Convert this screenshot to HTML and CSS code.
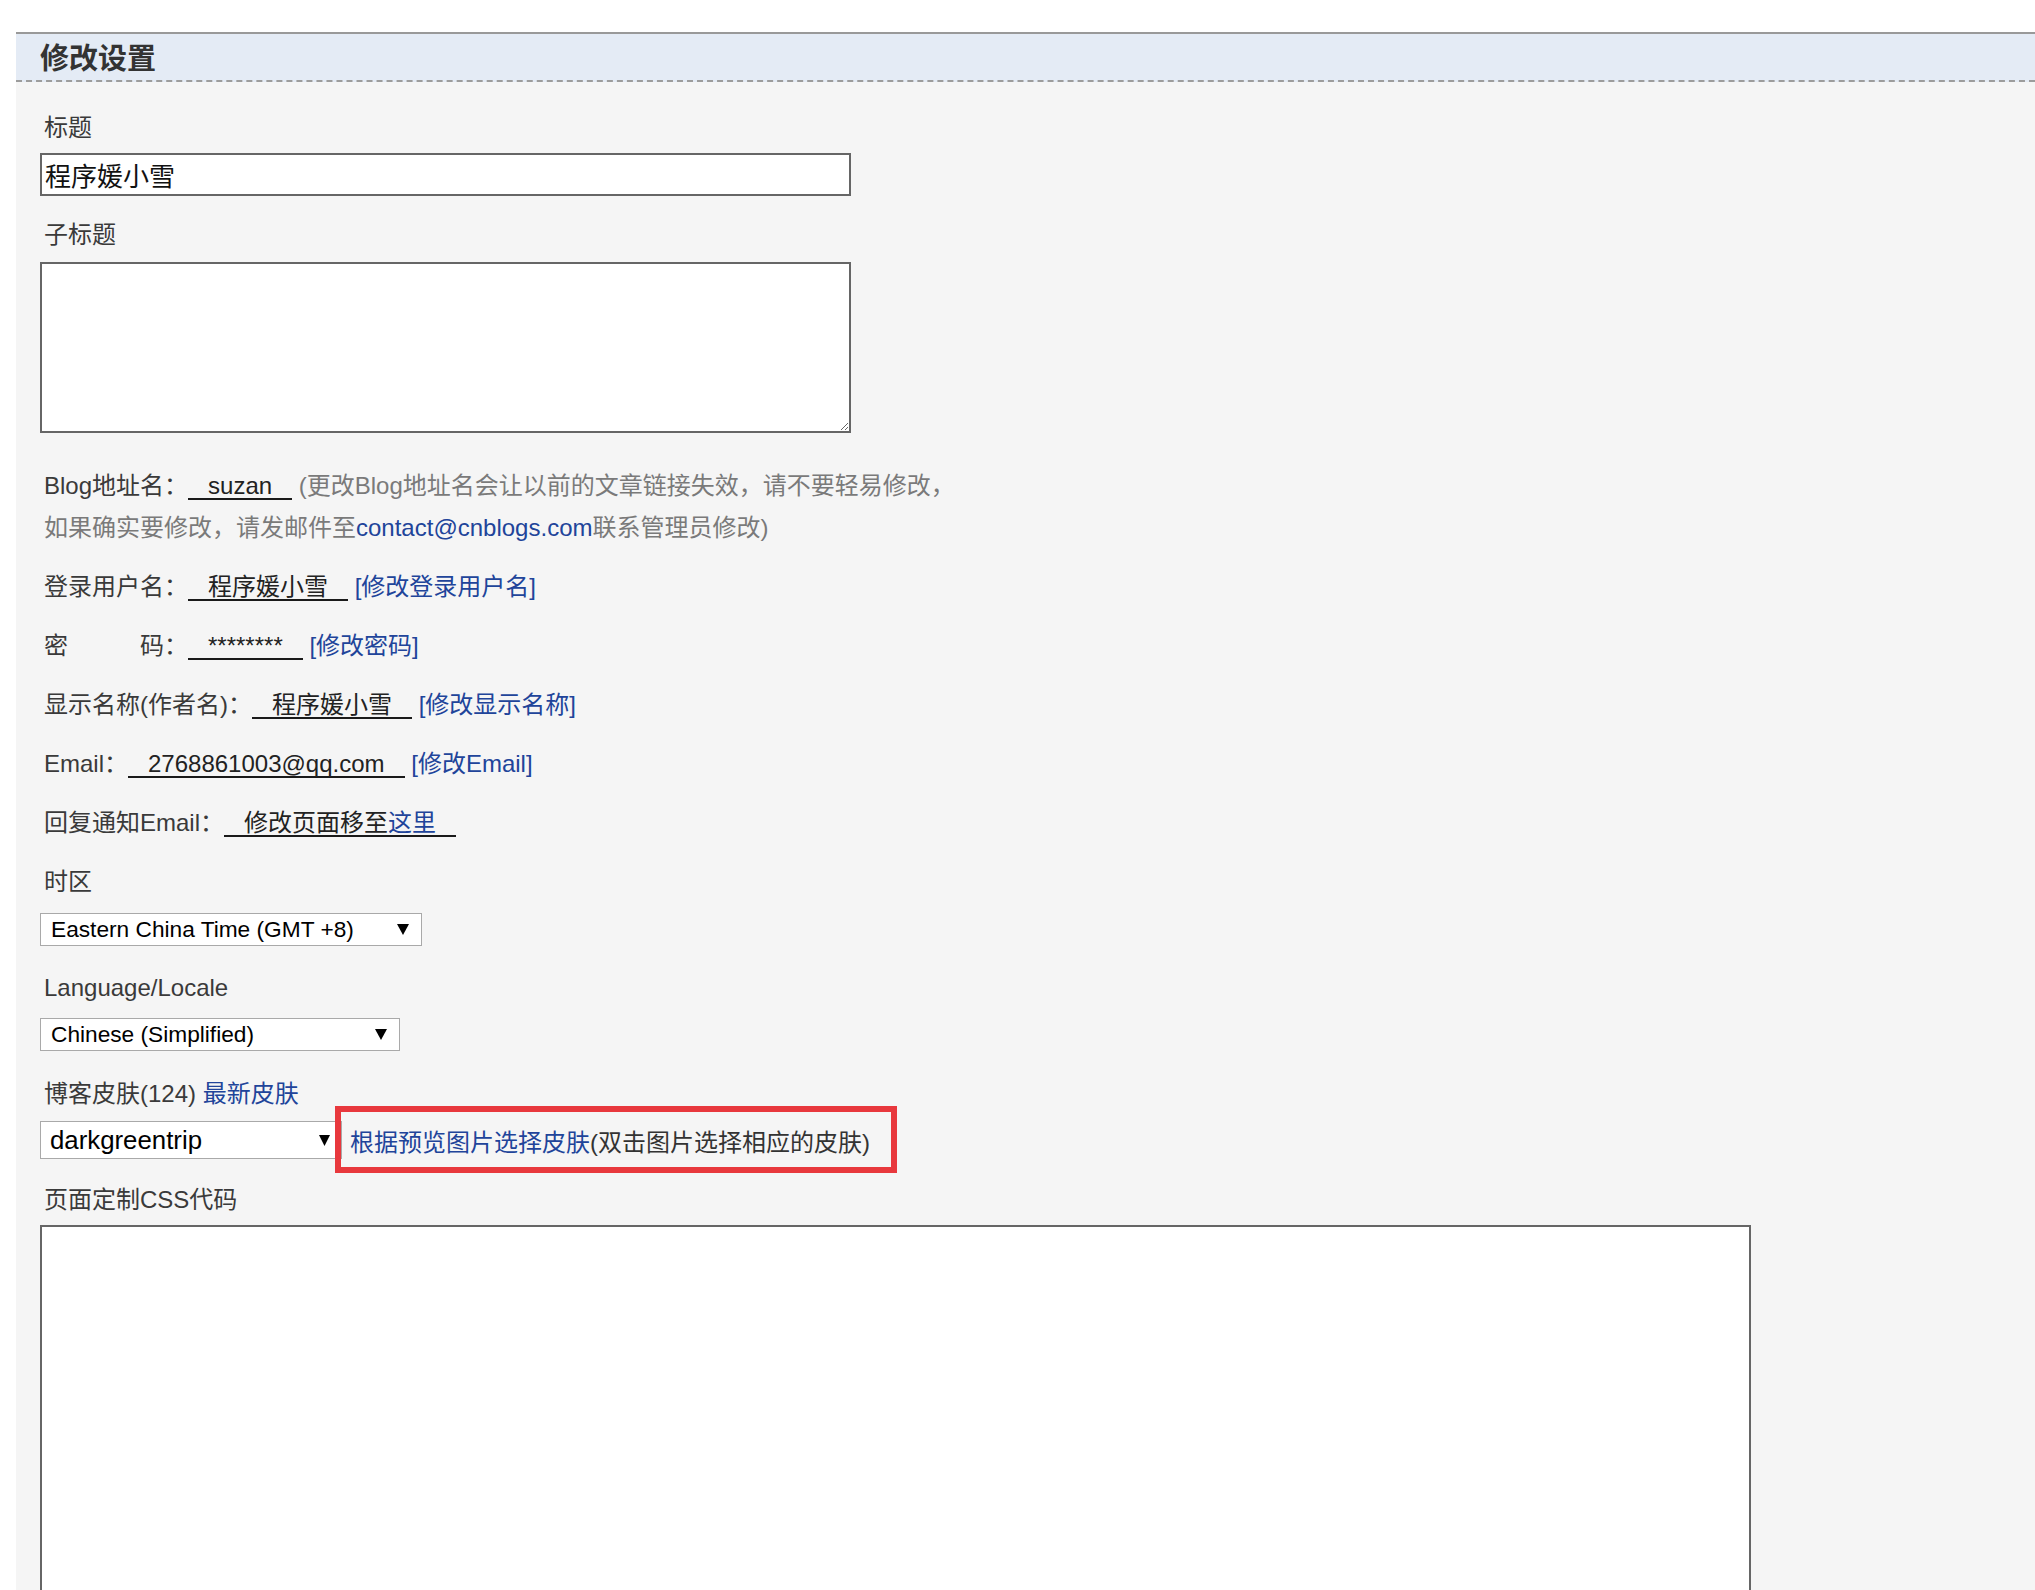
FILE: index.html
```html
<!DOCTYPE html>
<html lang="zh-CN">
<head>
<meta charset="utf-8">
<title>修改设置</title>
<link rel="stylesheet" href="styles.css">
</head>
<body>
<div class="panel">
  <h2 class="panel-title">修改设置</h2>
  <div class="form">
    <div class="label l-title">标题</div>
    <input class="text-input" type="text" value="程序媛小雪">

    <div class="label l-sub">子标题</div>
    <textarea class="area area-sub"></textarea>

    <div class="blog-line">Blog地址名：<span class="val">suzan</span> <span class="hint">(更改Blog地址名会让以前的文章链接失效，请不要轻易修改，<br>如果确实要修改，请发邮件至<a class="link" href="#">contact@cnblogs.com</a>联系管理员修改)</span></div>

    <div class="row">登录用户名：<span class="val">程序媛小雪</span> <a class="link" href="#">[修改登录用户名]</a></div>
    <div class="row">密　　　码：<span class="val">********</span> <a class="link" href="#">[修改密码]</a></div>
    <div class="row">显示名称(作者名)：<span class="val">程序媛小雪</span> <a class="link" href="#">[修改显示名称]</a></div>
    <div class="row">Email：<span class="val">2768861003@qq.com</span> <a class="link" href="#">[修改Email]</a></div>
    <div class="row">回复通知Email：<span class="val">修改页面移至<a class="link" href="#">这里</a></span></div>

    <div class="label l-tz">时区</div>
    <div class="select sel-tz">
      <span>Eastern China Time (GMT +8)</span>
      <svg class="arrow" width="12" height="11" viewBox="0 0 12 11"><polygon points="0,0 12,0 6,11" fill="#000"/></svg>
    </div>

    <div class="label l-lang">Language/Locale</div>
    <div class="select sel-lang">
      <span>Chinese (Simplified)</span>
      <svg class="arrow" width="12" height="11" viewBox="0 0 12 11"><polygon points="0,0 12,0 6,11" fill="#000"/></svg>
    </div>

    <div class="label l-skin">博客皮肤(124) <a class="link" href="#">最新皮肤</a></div>
    <div class="skin-row">
      <div class="select sel-skin">
        <span>darkgreentrip</span>
        <svg class="arrow" width="11" height="11" viewBox="0 0 11 11"><polygon points="0,0 11,0 5.5,11" fill="#000"/></svg>
      </div>
      <span class="skin-link"><a class="link" href="#">根据预览图片选择皮肤</a>(双击图片选择相应的皮肤)</span>
    </div>

    <div class="label l-css">页面定制CSS代码</div>
    <textarea class="area area-css"></textarea>
  </div>
</div>
</body>
</html>
```

FILE: styles.css
```css
html, body {
  margin: 0;
  padding: 0;
  background: #ffffff;
}

body {
  font-family: "Liberation Sans", "Noto Sans CJK SC", sans-serif;
  font-size: 24px;
  color: #3a3a3a;
  overflow: hidden;
}

.panel {
  margin: 32px 0 0 16px;
  background: #f5f5f5;
  border-top: 2px solid #999999;
  min-height: 1600px;
}

.panel-title {
  margin: 0;
  height: 46px;
  line-height: 50px;
  padding-left: 24px;
  background: #e4ebf5;
  border-bottom: 2px dashed #9c9c9c;
  font-size: 29px;
  font-weight: 700;
  color: #333333;
}

.form {
  padding-left: 24px;
}

.label {
  padding-left: 4px;
  line-height: 30px;
}

.l-title { margin-top: 31px; }
.l-sub { margin-top: 24px; }
.l-tz { margin-top: 23px; }
.l-lang { margin-top: 27px; }
.l-skin { margin-top: 28px; }
.l-css { margin-top: 26px; }

.text-input {
  display: block;
  box-sizing: border-box;
  width: 811px;
  height: 43px;
  margin: 10px 0 0 0;
  padding: 0 3px;
  border: 2px solid #666666;
  background: #ffffff;
  font-family: "Liberation Sans", "Noto Sans CJK SC", sans-serif;
  font-size: 26px;
  color: #111111;
  outline: none;
}

.area {
  display: block;
  box-sizing: border-box;
  border: 2px solid #666666;
  background: #ffffff;
  outline: none;
  margin: 0;
}

.area-sub {
  width: 811px;
  height: 171px;
  margin-top: 12px;
}

.area-css {
  width: 1711px;
  height: 420px;
  margin-top: 10px;
}

.blog-line {
  margin-top: 32px;
  padding-left: 4px;
  line-height: 42px;
}

.row {
  margin-top: 17px;
  padding-left: 4px;
  line-height: 42px;
}

.val {
  display: inline-block;
  line-height: 24px;
  padding: 0 20px;
  border-bottom: 2px solid #1a1a1a;
  color: #222222;
}

.hint {
  color: #7a7a7a;
}

.link {
  color: #21449a;
  text-decoration: none;
}

.select {
  display: flex;
  align-items: center;
  justify-content: space-between;
  box-sizing: border-box;
  border: 1px solid #a9a9a9;
  background: #ffffff;
  color: #000000;
  white-space: nowrap;
}

.sel-tz {
  width: 382px;
  height: 33px;
  margin-top: 16px;
  padding: 0 12px 0 10px;
  font-size: 22.7px;
}

.sel-lang {
  width: 360px;
  height: 33px;
  margin-top: 15px;
  padding: 0 12px 0 10px;
  font-size: 22.7px;
}

.skin-row {
  display: flex;
  align-items: flex-start;
  height: 38px;
  margin-top: 12px;
}

.sel-skin {
  width: 302px;
  height: 38px;
  padding: 0 11px 0 9px;
  font-size: 25.8px;
  flex: none;
}

.arrow {
  display: block;
  flex: none;
}

.skin-link {
  position: relative;
  margin-left: 8px;
  line-height: 43px;
  white-space: nowrap;
  color: #333333;
}

.skin-link::after {
  content: "";
  position: absolute;
  left: -15px;
  right: -27px;
  top: -15px;
  bottom: -9px;
  border: 6px solid #e8383d;
  pointer-events: none;
}
```
